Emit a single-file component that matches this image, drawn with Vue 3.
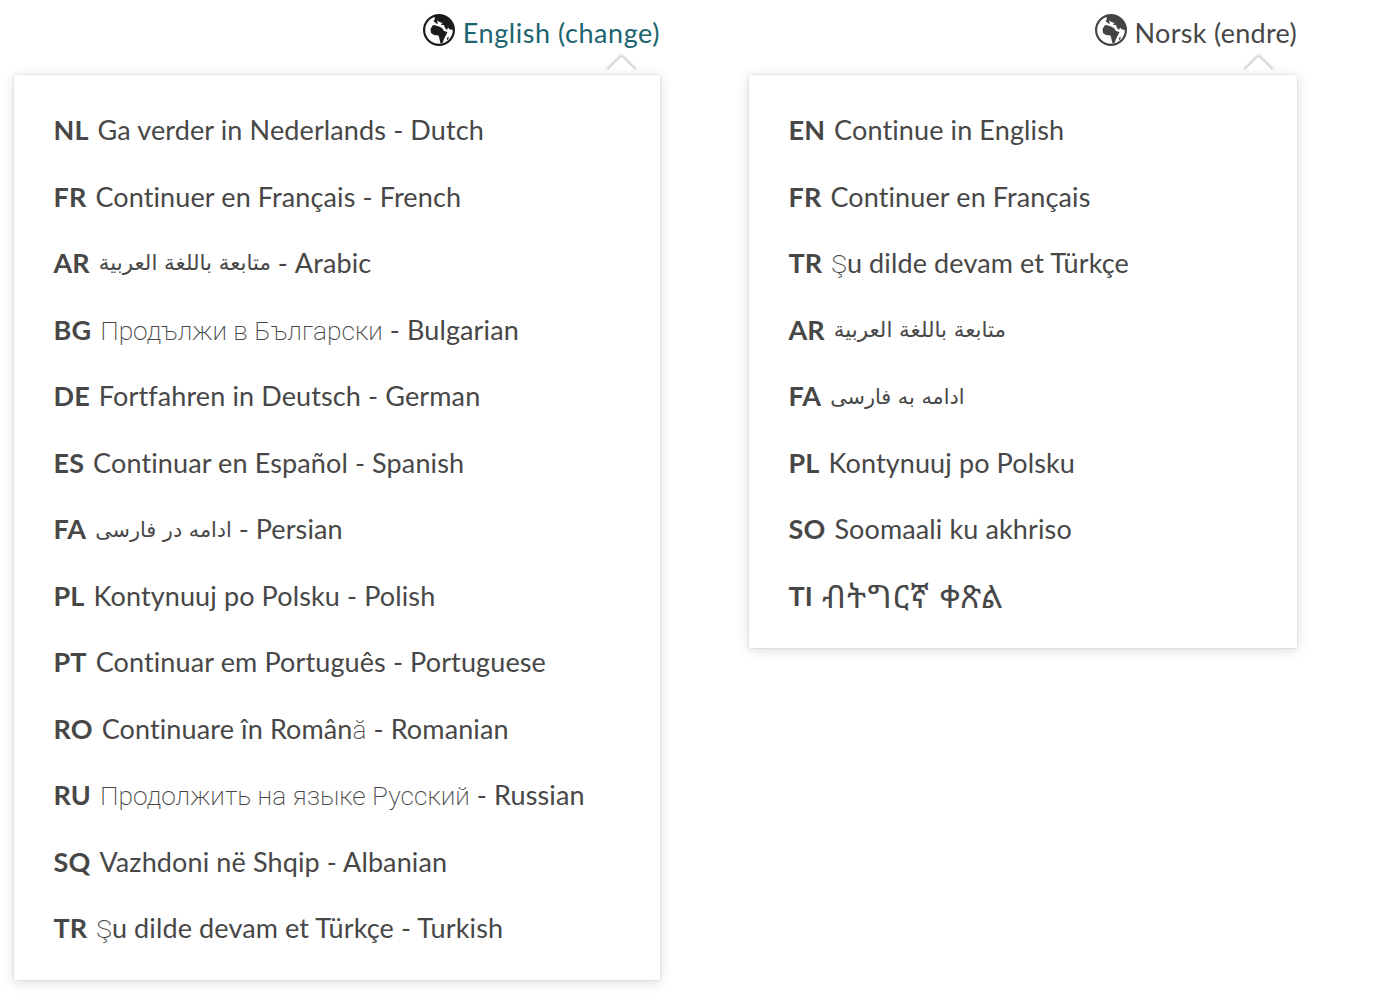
<script setup>
const left = [
  { code: 'NL', parts: [['Ga verder in Nederlands - Dutch', '']] },
  { code: 'FR', parts: [['Continuer en Français - French', '']] },
  { code: 'AR', parts: [['متابعة باللغة العربية', 'arabic'], [' - Arabic', '']] },
  { code: 'BG', parts: [['Продължи в Български', 'thin'], [' - Bulgarian', '']] },
  { code: 'DE', parts: [['Fortfahren in Deutsch - German', '']] },
  { code: 'ES', parts: [['Continuar en Español - Spanish', '']] },
  { code: 'FA', parts: [['ادامه در فارسی', 'persian'], [' - Persian', '']] },
  { code: 'PL', parts: [['Kontynuuj po Polsku - Polish', '']] },
  { code: 'PT', parts: [['Continuar em Português - Portuguese', '']] },
  { code: 'RO', parts: [['Continuare în Român', ''], ['ă', 'thin'], [' - Romanian', '']] },
  { code: 'RU', parts: [['Продолжить на языке Русский', 'thin'], [' - Russian', '']] },
  { code: 'SQ', parts: [['Vazhdoni në Shqip - Albanian', '']] },
  { code: 'TR', parts: [['Ş', 'thin'], ['u dilde devam et Türkçe - Turkish', '']] },
]
const right = [
  { code: 'EN', parts: [['Continue in English', '']] },
  { code: 'FR', parts: [['Continuer en Français', '']] },
  { code: 'TR', parts: [['Ş', 'thin'], ['u dilde devam et Türkçe', '']] },
  { code: 'AR', parts: [['متابعة باللغة العربية', 'arabic']] },
  { code: 'FA', parts: [['ادامه به فارسی', 'persian']] },
  { code: 'PL', parts: [['Kontynuuj po Polsku', '']] },
  { code: 'SO', parts: [['Soomaali ku akhriso', '']] },
  { code: 'TI', parts: [['ብትግርኛ ቀጽል', 'ethiopic']] },
]
const columns = [
  { key: 'en', cls: 'col-left', label: 'English (change)', rows: left },
  { key: 'no', cls: 'col-right', label: 'Norsk (endre)', rows: right },
]
</script>

<template>
  <div class="page">
    <section v-for="col in columns" :key="col.key" class="col" :class="col.cls">
      <div class="trigger">
        <svg class="globe" viewBox="0 0 32 32" aria-hidden="true">
          <circle cx="16" cy="16" r="14.9" fill="none" stroke="currentColor" stroke-width="2.2" />
          <path fill="currentColor" d="M11 2 A15 15 0 0 1 31 16 L27 15.5 L25 13.5 L24 16 L22 14 L21 11 L18 11 L19.5 9 L16.5 8 L14 6.5 L15 10 L12.5 9 L10.5 7 L12 5 Z" />
          <path fill="currentColor" d="M7.5 15 L10 11 L13 11.5 L16 12.5 L19 14 L21 17 L24.5 18 L22.5 22 L21 25 L19.5 29 L17.5 29.5 L16.5 25 L15.5 21.5 L11 21 L8 19 Z" />
          <path fill="currentColor" d="M24 24 L25.5 22.5 L25.5 25 L24.2 26.5 Z" />
        </svg>
        <span class="label">{{ col.label }}</span>
      </div>
      <div class="panel">
        <span class="arrow"></span>
        <div v-for="row in col.rows" :key="row.code" class="row">
          <b class="code">{{ row.code }}</b>
          <span class="text"><span v-for="(p, i) in row.parts" :key="i" :class="p[1]" dir="auto">{{ p[0] }}</span></span>
        </div>
      </div>
    </section>
  </div>
</template>

<style>
body { background: #fff; }
</style>

<style scoped>
.page {
  display: flex;
  align-items: flex-start;
  gap: 89px;
  padding-left: 14px;
  min-height: 1000px;
  font-family: "Lato", "Noto Sans", sans-serif;
  color: #474747;
  letter-spacing: .12px;
}
.col-left { width: 646px; }
.col-right { width: 548px; }
.trigger {
  height: 75px;
  display: flex;
  justify-content: flex-end;
  align-items: flex-start;
  gap: 8px;
  padding-top: 14px;
  box-sizing: border-box;
  font-size: 27px;
  line-height: 38px;
  letter-spacing: .3px;
}
.col-left .trigger { color: #1c6470; letter-spacing: .55px; }
.col-left .globe { color: #1c1c1c; }
.col-right .globe { color: #444; }
.globe { width: 32px; height: 32px; flex: none; }
.panel {
  position: relative;
  background: #fff;
  box-shadow: 0 0 1.5px rgba(0, 0, 0, .18), 0 2px 12px rgba(0, 0, 0, .15);
  padding: 21.5px 0 19px 39.5px;
}
.arrow {
  position: absolute;
  top: -14.5px;
  right: 27.5px;
  width: 23px;
  height: 23px;
  background: #fff;
  transform: rotate(45deg);
  box-shadow: -1px -1px 3px rgba(0, 0, 0, .3);
  clip-path: polygon(-20% -20%, 100% -20%, -20% 100%);
}
.row {
  height: 66.5px;
  display: flex;
  align-items: center;
  gap: 9px;
  font-size: 27px;
  white-space: nowrap;
}
.code { font-weight: 700; }
.thin { font-family: "Roboto", sans-serif; font-weight: 200; font-size: 26.3px; letter-spacing: 0; }
.arabic { font-family: "DejaVu Sans", sans-serif; font-size: 21.4px; letter-spacing: 0; vertical-align: 3px; }
.persian { font-family: "DejaVu Sans", sans-serif; font-size: 20.8px; letter-spacing: 0; vertical-align: 2px; }
.ethiopic { font-family: "Noto Sans Ethiopic", "DejaVu Sans", sans-serif; font-size: 32px; letter-spacing: 1.3px; }
</style>
